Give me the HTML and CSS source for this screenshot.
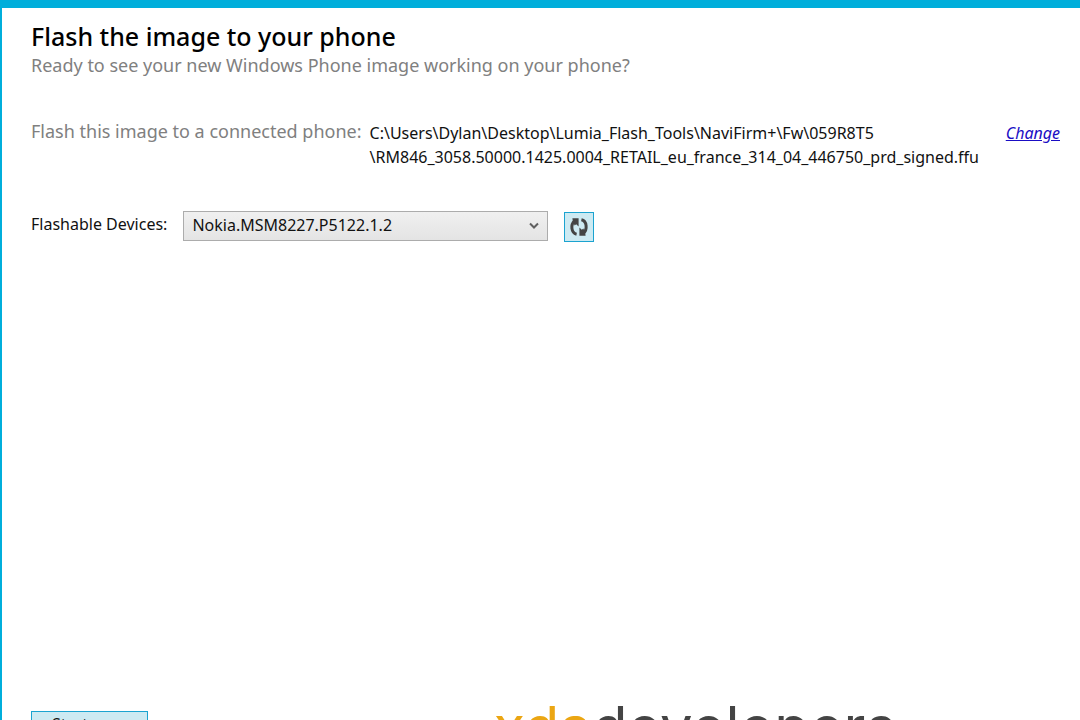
FILE: index.html
```html
<!DOCTYPE html>
<html lang="en">
<head>
<meta charset="utf-8">
<meta name="viewport" content="width=device-width, initial-scale=1">
<title>Flash the image to your phone</title>
<link rel="stylesheet" href="styles.css">
</head>
<body>
<main class="window">
  <header class="heading">
    <h1 class="title">Flash the image to your phone</h1>
    <p class="subtitle">Ready to see your new Windows Phone image working on your phone?</p>
  </header>
  <section class="image-row">
    <h2 class="image-label">Flash this image to a connected phone:</h2>
    <p class="path">C:\Users\Dylan\Desktop\Lumia_Flash_Tools\NaviFirm+\Fw\059R8T5<br>\RM846_3058.50000.1425.0004_RETAIL_eu_france_314_04_446750_prd_signed.ffu</p>
    <a class="change" href="#">Change</a>
  </section>
  <section class="device-row">
    <label class="device-label" for="device">Flashable Devices:</label>
    <span class="combo">
      <select class="device-select" id="device">
        <option>Nokia.MSM8227.P5122.1.2</option>
      </select>
      <svg class="chevron" viewBox="0 0 10 8" aria-hidden="true"><path d="M1 1.5 5 5.5 9 1.5"/></svg>
    </span>
    <button class="refresh" type="button" aria-label="Refresh devices">
      <svg class="refresh-icon" viewBox="0 0 20 20" aria-hidden="true">
        <path class="arc" d="M7.6 17.2C2 16 1.4 7.4 5.6 3.8"/>
        <path class="head" d="M3.4 1.2H9.6V9.6L7.2 7.2 5.6 8.4 3.8 4Z"/>
        <path class="arc" d="M12.4 2.8C18 4 18.6 12.6 14.4 16.2"/>
        <path class="head" d="M16.6 18.8H10.4V10.4L12.8 12.8 14.4 11.6 16.2 16Z"/>
      </svg>
    </button>
  </section>
  <footer class="footer">
    <button class="start" type="button">Start</button>
    <span class="logo"><span class="logo-accent">xda</span>developers</span>
  </footer>
</main>
</body>
</html>
```
FILE: styles.css
```css
* { box-sizing: border-box; }

body {
  margin: 0;
  height: 100vh;
  overflow: hidden;
  background: #fff;
  color: #111;
  font-family: "Noto Sans", "Open Sans", sans-serif;
  font-size: 16px;
}

h1, h2, p { margin: 0; font-weight: 400; }

.window {
  display: flex;
  flex-direction: column;
  min-height: calc(100vh + 60px);
  padding: 12px 20px 20px 29px;
  border-top: 8px solid #00aedb;
  border-left: 2px solid #00aedb;
}

.title {
  color: #000;
  font-size: 25px;
  font-weight: 500;
  line-height: 33px;
}

.subtitle, .image-label {
  color: #808080;
  font-size: 18px;
  line-height: 24px;
}

.image-row {
  display: flex;
  gap: 8px;
  margin-top: 42px;
}

.image-label { flex: none; }

.path, .change {
  padding-top: 2px;
  line-height: 24px;
}

.change {
  margin-left: auto;
  color: #1a0dc4;
  font-style: italic;
}

.device-row {
  display: flex;
  gap: 16px;
  margin-top: 42px;
}

.device-label { line-height: 26px; }

.combo { position: relative; }

.device-select {
  width: 365px;
  height: 30px;
  padding: 0 30px 3px 8px;
  appearance: none;
  border: 1px solid #acacac;
  border-radius: 0;
  background: linear-gradient(#f0f0f0, #e4e4e4);
  color: #111;
  font: inherit;
}

.chevron {
  position: absolute;
  top: 11px;
  right: 9px;
  width: 10px;
  height: 8px;
  fill: none;
  stroke: #606060;
  stroke-width: 2;
  pointer-events: none;
}

.refresh, .start {
  border: 1px solid #1ba3d0;
  background: #cdeaf2;
  color: #111;
  font: inherit;
}

.refresh {
  display: grid;
  place-items: center;
  width: 30px;
  height: 30px;
  margin-top: 1px;
  padding: 0;
}

.refresh-icon { width: 20px; height: 20px; }
.arc { fill: none; stroke: #444; stroke-width: 3; }
.head { fill: #444; }

.footer {
  display: flex;
  align-items: flex-start;
  justify-content: space-between;
  margin-top: auto;
  padding-right: 164px;
}

.start {
  width: 117px;
  height: 30px;
  margin-top: 20px;
  padding: 0 40px 4px 20px;
  text-align: left;
}

.logo {
  margin-bottom: -4px;
  color: #444;
  font-family: Inter, sans-serif;
  font-size: 58px;
  font-weight: 400;
  line-height: 73px;
}

.logo-accent { color: #eba613; }
```
